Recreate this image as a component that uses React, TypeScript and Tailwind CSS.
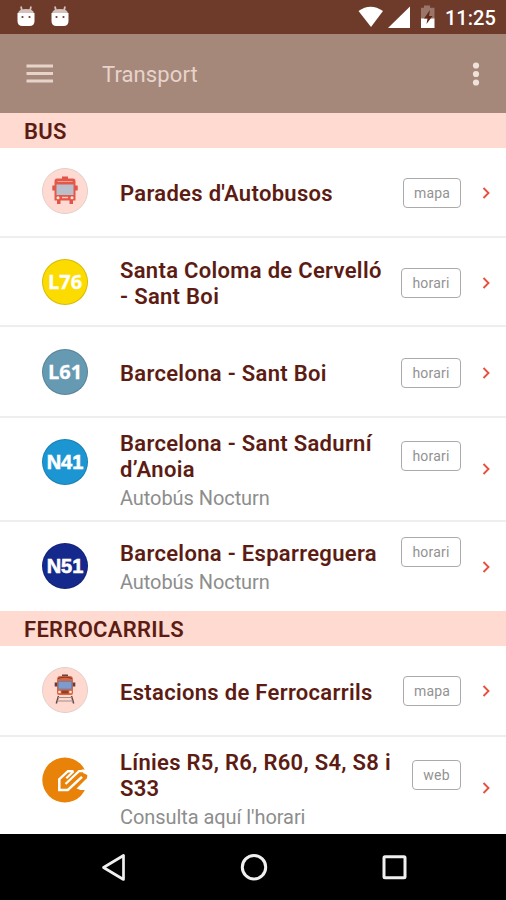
import React from 'react';
import clsx from 'clsx';

type RowProps = {
  icon: React.ReactNode;
  lines: string[];
  note?: string;
  action: string;
  height: string;
  iconTop: string;
  textTop: string;
  actionTop: string;
  actionSize: string;
  arrowTop: string;
  last?: boolean;
};

const LineBadge = ({ label, color, night }: { label: string; color: string; night?: boolean }) => (
  <div className={clsx('flex h-[46px] w-[46px] items-center justify-center rounded-full border border-black/15 text-white', color)}>
    <span
      className={clsx(
        'leading-none',
        night ? "font-['Liberation_Sans',sans-serif] text-[20px] font-bold [-webkit-text-stroke:0.6px_white]" : "font-['Open_Sans',sans-serif] text-[20px] font-bold [-webkit-text-stroke:0.3px_white]"
      )}
    >
      {label}
    </span>
  </div>
);

const BusIcon = () => (
  <svg width="46" height="46" viewBox="0 0 46 46">
    <circle cx="23" cy="23" r="22.5" fill="#ffdad2" stroke="#dfd0c8" />
    <path d="M20 8.500h6v3h-6z" fill="#df5547" />
    <path d="M15 10.500h16q2.500 0 2.500 3v19h-21v-19q0-3 2.500-3z" fill="#e4584a" />
    <path d="M10.300 17.500h2.700v5h-2.700zM33 17.500h2.700v5H33z" fill="#df5547" />
    <path d="M14.500 16.500h17V27h-17z" fill="#b9c0cc" />
    <path d="M15.500 13.500h15" stroke="#f2a092" strokeWidth="1" />
    <path d="M20 29.500h6" stroke="#ffc4b8" strokeWidth="1.500" />
    <circle cx="16" cy="29.700" r="1.500" fill="#ffe4db" />
    <circle cx="30" cy="29.700" r="1.500" fill="#ffe4db" />
    <path d="M15 32h3.500v4H15zM27.500 32H31v4h-3.500z" fill="#df5547" />
  </svg>
);

const TrainIcon = () => (
  <svg width="46" height="46" viewBox="0 0 46 46">
    <circle cx="23" cy="23" r="22.500" fill="#ffd9d0" stroke="#dfd0c8" />
    <path d="M20 7.500h6v3h-6z" fill="#783b2e" />
    <path d="M18 9h10q3 0 3 4v13q0 2-3 2H18q-3 0-3-2V13q0-4 3-4z" fill="#d86643" />
    <path d="M16 11.500q7-2.500 14 0" stroke="#793c31" strokeWidth="1.200" fill="none" />
    <path d="M12.700 15.500h2.500v4h-2.500zM30.800 15.500h2.500v4h-2.500z" fill="#5d3b43" />
    <path d="M16.300 14.500h13.400v7.500H16.300z" fill="#7d9ccd" stroke="#6a7cab" strokeWidth=".8" />
    <circle cx="17.500" cy="25" r="1.300" fill="#ffe4c9" />
    <circle cx="28.500" cy="25" r="1.300" fill="#ffe4c9" />
    <path d="M19.500 23.500h7v3h-7z" fill="#963d25" />
    <path d="M16.500 29l-2.200 7.500M29.500 29l2.200 7.500" stroke="#62484a" strokeWidth="1.500" />
    <path d="M16 30.500h14M15 34h16" stroke="#a98c87" strokeWidth="1" />
  </svg>
);

const FgcIcon = () => (
  <svg width="46" height="46" viewBox="0 0 46 46">
    <circle cx="22.800" cy="23" r="22.500" fill="#e98208" />
    <path d="M39.500 12.500H46v5h-4zM46 20L34.500 31.500l4 1.500H46z" fill="#fff" />
    <path d="M41.500 16l4 2.500-1 3-4-2z" fill="#e98208" />
    <path d="M31.500 14.200H26l-8.700 8V33h8.500L40 19.800" fill="none" stroke="#fff" strokeWidth="2.500" />
    <path d="M31.500 14.200l-7.200 7M42 14.200h-5L23.500 27" fill="none" stroke="#fff" strokeWidth="2.200" />
  </svg>
);

const Robot = () => (
  <svg width="20" height="21" viewBox="0 0 20 21">
    <path d="M5 .5l1 4.500M15 .5l-1 4.500" stroke="#d3c2bb" strokeWidth="1.800" />
    <path d="M2 8q0-5 8-5t8 5z" fill="#d3c2bb" />
    <path d="M1.500 7h17v8q0 5-5 5h-7q-5 0-5-5z" fill="#fff" />
    <circle cx="6.500" cy="11" r="1.100" fill="#6e3b2a" />
    <circle cx="13.500" cy="11" r="1.100" fill="#6e3b2a" />
  </svg>
);

const StatusBar = () => (
  <div className="flex h-[34px] items-start bg-[#6e3a29] text-white">
    <div className="flex gap-[14px] pt-[5.500px] pl-4">
      <Robot />
      <Robot />
    </div>
    <div className="ml-auto flex pr-[10px]">
      <svg width="86" height="34" viewBox="0 0 86 34">
        <path d="M.5 11Q12.500 2.500 25 11L13 27z" fill="#fff" />
        <path d="M52 6.500V28H30z" fill="#fff" />
        <path d="M66 5.500h6v2.300h4.500V19H63V7.800h3z" fill="#9a7569" />
        <path d="M63 18.500h13.500V28H63z" fill="#fff" />
        <path d="M72 10l-6 8.500h3.500l-1 5.500 6-8H71z" fill="#5f2818" />
      </svg>
      <span className="w-[52px] pt-[6px] pl-px text-[20px] leading-6 font-medium whitespace-nowrap">11:25</span>
    </div>
  </div>
);

const AppBar = () => (
  <header className="flex h-[79px] items-center bg-[#a6887b] pr-[24px] pl-[26px] text-[#e6d4cb]">
    <svg width="28" height="20" viewBox="0 0 28 20">
      <path d="M.5 2h26.500M.5 9.500h26.500M.5 17h26.500" stroke="currentColor" strokeWidth="3" />
    </svg>
    <h1 className="ml-12 pt-[2px] text-[22px] leading-7 tracking-[0.100px]">Transport</h1>
    <svg className="ml-auto" width="12" height="26" viewBox="0 0 12 26">
      <circle cx="6" cy="4.500" r="3.100" fill="#efe2da" />
      <circle cx="6" cy="13" r="3.100" fill="#efe2da" />
      <circle cx="6" cy="21.500" r="3.100" fill="#efe2da" />
    </svg>
  </header>
);

const SectionHeader = ({ title }: { title: string }) => (
  <h2 className="h-[35px] bg-[#fedad1] pt-px pl-6 text-[22px] leading-[35px] font-semibold tracking-[0.300px] text-[#5c1c13]">{title}</h2>
);

const Row = ({ icon, lines, note, action, height, iconTop, textTop, actionTop, actionSize, arrowTop, last }: RowProps) => (
  <div className={clsx('flex items-start bg-white pl-[42px]', height, !last && 'border-b-2 border-[#eeeeee]')}>
    <div className={clsx('shrink-0', iconTop)}>{icon}</div>
    <div className={clsx('ml-8 pt-px whitespace-nowrap', textTop)}>
      {lines.map((line) => (
        <p key={line} className="text-[22px] leading-[26px] font-semibold tracking-[0.310px] text-[#5c1c13]">{line}</p>
      ))}
      {note && <p className="mt-px text-[20px] leading-7 tracking-[-0.070px] text-[#8d8d8d]">{note}</p>}
    </div>
    <div className={clsx('ml-auto flex h-[30px] shrink-0 items-center justify-center rounded-[4px] border-[1.500px] border-[#aaaaaa] text-[14px] tracking-[0.200px] text-[#929292]', actionTop, actionSize)}>
      <span>{action}</span>
    </div>
    <svg className={clsx('mr-[15px] ml-[21px] shrink-0', arrowTop)} width="9" height="14" viewBox="0 0 9 14">
      <path d="M1.500 2l5 5-5 5" fill="none" stroke="#e5513d" strokeWidth="1.900" />
    </svg>
  </div>
);

const NavBar = () => (
  <nav className="flex h-[66px] shrink-0 items-center justify-between bg-black px-[98px]">
    <svg width="30" height="30" viewBox="0 0 30 30">
      <path d="M25.500 3.500v24L5.500 15.500z" fill="none" stroke="#f0f0f0" strokeWidth="2.700" strokeLinejoin="round" />
    </svg>
    <svg width="30" height="30" viewBox="0 0 30 30">
      <circle cx="16" cy="15.200" r="11.700" fill="none" stroke="#f0f0f0" strokeWidth="3" />
    </svg>
    <svg width="30" height="30" viewBox="0 0 30 30">
      <rect x="6" y="4.800" width="21" height="21" rx="1" fill="none" stroke="#f0f0f0" strokeWidth="3" />
    </svg>
  </nav>
);

const busRows: RowProps[] = [
  { icon: <BusIcon />, lines: ["Parades d'Autobusos"], action: 'mapa', height: 'h-[90px]', iconTop: 'mt-5', textTop: 'mt-8', actionTop: 'mt-[30px]', actionSize: 'w-[58px]', arrowTop: 'mt-[38px]' },
  { icon: <LineBadge label="L76" color="bg-[#fcdc00]" />, lines: ['Santa Coloma de Cervelló', '- Sant Boi'], action: 'horari', height: 'h-[89px]', iconTop: 'mt-[21px]', textTop: 'mt-[19px]', actionTop: 'mt-[30px]', actionSize: 'w-[60px]', arrowTop: 'mt-[38px]' },
  { icon: <LineBadge label="L61" color="bg-[#6699b2]" />, lines: ['Barcelona - Sant Boi'], action: 'horari', height: 'h-[91px]', iconTop: 'mt-[22px]', textTop: 'mt-[33px]', actionTop: 'mt-[31px]', actionSize: 'w-[60px]', arrowTop: 'mt-[39px]' },
  { icon: <LineBadge label="N41" color="bg-[#1c96d3]" night />, lines: ['Barcelona - Sant Sadurní', 'd’Anoia'], note: 'Autobús Nocturn', action: 'horari', height: 'h-[104px]', iconTop: 'mt-[21px]', textTop: 'mt-3', actionTop: 'mt-[23px]', actionSize: 'w-[60px]', arrowTop: 'mt-[44px]' },
  { icon: <LineBadge label="N51" color="bg-[#14298b]" night />, lines: ['Barcelona - Esparreguera'], note: 'Autobús Nocturn', action: 'horari', height: 'h-[89px]', iconTop: 'mt-[21px]', textTop: 'mt-[18px]', actionTop: 'mt-[15px]', actionSize: 'w-[60px]', arrowTop: 'mt-[38px]', last: true },
];

const trainRows: RowProps[] = [
  { icon: <TrainIcon />, lines: ['Estacions de Ferrocarrils'], action: 'mapa', height: 'h-[91px]', iconTop: 'mt-[21px]', textTop: 'mt-[33px]', actionTop: 'mt-[30px]', actionSize: 'w-[58px]', arrowTop: 'mt-[38px]' },
  { icon: <FgcIcon />, lines: ['Línies R5, R6, R60, S4, S8 i', 'S33'], note: "Consulta aquí l'horari", action: 'web', height: 'h-[97px]', iconTop: 'mt-5', textTop: 'mt-3', actionTop: 'mt-[23px]', actionSize: 'w-[49px]', arrowTop: 'mt-[44px]', last: true },
];

export default function App() {
  return (
    <div className="flex h-[900px] w-[506px] flex-col overflow-hidden bg-white font-[Roboto,sans-serif]">
      <StatusBar />
      <AppBar />
      <main className="flex-1 overflow-hidden">
        <SectionHeader title="BUS" />
        {busRows.map((row) => (
          <Row key={row.lines[0]} {...row} />
        ))}
        <SectionHeader title="FERROCARRILS" />
        {trainRows.map((row) => (
          <Row key={row.lines[0]} {...row} />
        ))}
      </main>
      <NavBar />
    </div>
  );
}
